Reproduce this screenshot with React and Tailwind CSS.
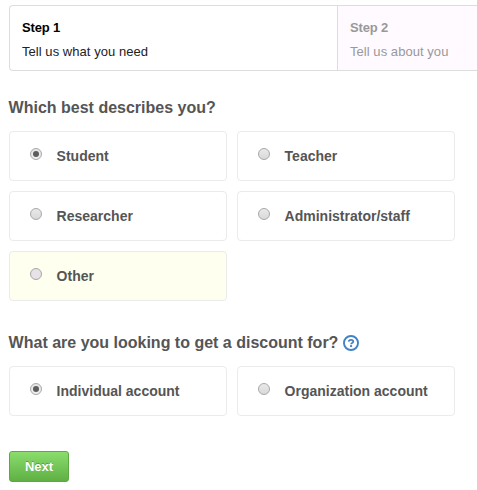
function Radio({ checked, hovered }) {
  return (
    <span
      className={`mt-4 flex size-3 shrink-0 items-center justify-center rounded-full border ${
        checked
          ? 'border-[#a8a8a8] bg-linear-to-b from-[#e4e4e4] to-[#f0f0f0]'
          : hovered
            ? 'border-[#a6a6a6] bg-[#e6e2e7]'
            : 'border-[#a8a8a8] bg-linear-to-b from-[#e9e9e9] to-[#d9d9d9]'
      }`}
    >
      {checked && <span className="size-1.5 rounded-full bg-[#5c5c5c]" />}
    </span>
  );
}

function Option({ label, checked, hovered }) {
  return (
    <div
      className={`flex h-[50px] rounded border border-[#ebebeb] pl-5 ${hovered ? 'bg-[#ffffef]' : 'bg-white'}`}
    >
      <Radio checked={checked} hovered={hovered} />
      <span className="mt-4 ml-[14.6px] text-sm leading-4 font-bold whitespace-nowrap">{label}</span>
    </div>
  );
}

function HelpIcon() {
  return (
    <svg className="ml-[4.3px] size-4" viewBox="0 0 16 16" fill="none">
      <circle cx="8" cy="8" r="7.05" stroke="#4183c4" strokeWidth="1.9" />
      <path d="M5.7 6.6C5.8 5.4 6.7 4.8 8 4.8c1.4 0 2.3.7 2.3 1.8 0 1.5-2.2 1.4-2.2 2.7" stroke="#4183c4" strokeWidth="1.8" />
      <path d="M7.1 10.1h2v1.9h-2z" fill="#4183c4" />
    </svg>
  );
}

export default function App() {
  return (
    <div className="h-[490px] w-[477px] overflow-hidden bg-white pt-[5px] pl-[9px] font-['Liberation_Sans',Arial,sans-serif] text-[#555]">
      <div className="flex h-[66px] rounded-l border-y border-l border-[#ddd] text-[13px] leading-6">
        <div className="w-[327px] shrink-0 pt-2.5 pl-3 text-black">
          <div className="font-bold tracking-[-0.15px]">Step 1</div>
          <div className="tracking-[0.05px] text-[#222]">Tell us what you need</div>
        </div>
        <div className="flex-1 border-l border-[#ddd] bg-[#fefaff] pt-2.5 pl-3 text-[#999]">
          <div className="font-bold tracking-[-0.15px]">Step 2</div>
          <div className="tracking-[0.05px]">Tell us about you</div>
        </div>
      </div>

      <h2 className="mt-[27px] text-base leading-5 font-bold -ml-[0.4px]">Which best describes you?</h2>
      <div className="mt-[13px] grid grid-cols-[218px_218px] gap-2.5">
        <Option label="Student" checked />
        <Option label="Teacher" />
        <Option label="Researcher" />
        <Option label="Administrator/staff" />
        <Option label="Other" hovered />
      </div>

      <div className="mt-8 -ml-[0.4px] flex h-5 items-center">
        <h2 className="text-base leading-5 font-bold">What are you looking to get a discount for?</h2>
        <HelpIcon />
      </div>
      <div className="mt-[13px] grid grid-cols-[218px_218px] gap-2.5">
        <Option label="Individual account" checked />
        <Option label="Organization account" />
      </div>

      <button className="mt-[35px] flex h-[31px] w-[60px] items-center justify-center rounded-[3px] border border-[#5ca941] bg-linear-to-b from-[#8add6d] to-[#60b044] text-[13px] leading-4 font-bold text-white [text-shadow:0_-1px_0_rgba(0,0,0,0.25)]">
        Next
      </button>
    </div>
  );
}
